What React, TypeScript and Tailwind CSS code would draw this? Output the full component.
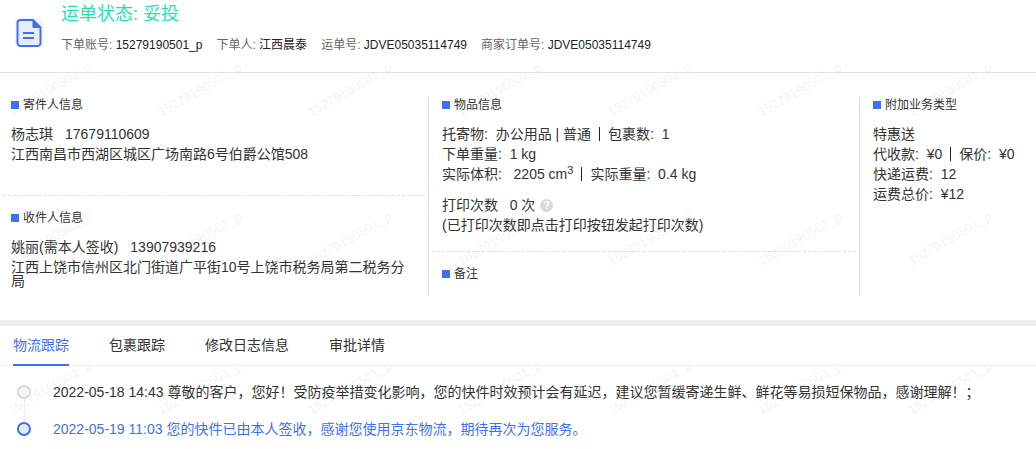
import React from 'react';

const font = { fontFamily: '"Liberation Sans", "Noto Sans CJK SC", sans-serif' };

function Heading({ children }: { children: React.ReactNode }) {
    return (
        <div className="flex items-center gap-[4px] text-[12px] leading-[16px] text-[#333]">
            <span className="w-[8px] h-[8px] bg-[#3f6ff5]" />
            <span>{children}</span>
        </div>
    );
}

function Bar() {
    return <span className="inline-block w-[1px] h-[14px] bg-[#222] mx-[8px] align-[-2px]" />;
}

function DocIcon() {
    return (
        <svg width="28" height="30" viewBox="0 0 28 30" fill="none">
            <rect x="0" y="0" width="28" height="30" rx="5" fill="#f3f6fe" />
            <path d="M5.5 2h12.5l7.5 7.5V25a3 3 0 0 1-3 3H5.5a3 3 0 0 1-3-3V5a3 3 0 0 1 3-3z" fill="#e6edfd" stroke="#3f6ff5" strokeWidth="2" strokeLinejoin="round" />
            <path d="M18 2v7.5h7.5z" fill="#3f6ff5" stroke="#3f6ff5" strokeWidth="1" strokeLinejoin="round" />
            <path d="M8 15h11M8 20h11" stroke="#3f6ff5" strokeWidth="2" />
        </svg>
    );
}

function Watermarks() {
    const items: { x: number; y: number }[] = [];
    for (let r = 0; r < 3; r++) {
        for (let c = 0; c < 7; c++) {
            items.push({ x: c * 150 + 50, y: r * 149 + 90 });
        }
    }
    return (
        <div className="absolute inset-0 overflow-hidden pointer-events-none">
            {items.map((it, i) => (
                <span
                    key={i}
                    className="absolute text-[13px] leading-[16px] text-[#f5f5f5] -translate-x-1/2 -translate-y-1/2 -rotate-[30deg] whitespace-nowrap"
                    style={{ left: it.x, top: it.y }}
                >
                    15279190501_p
                </span>
            ))}
        </div>
    );
}

export default function App() {
    return (
        <div className="relative w-[1036px] h-[449px] overflow-hidden bg-white text-[#333]" style={font}>
            <Watermarks />
            <div className="relative flex flex-col h-full">
                <header className="flex h-[73px] border-b border-[#e0e0e0] pl-[15px] shrink-0">
                    <div className="mt-[18px] mr-[18px]">
                        <DocIcon />
                    </div>
                    <div className="flex flex-col">
                        <div className="text-[18px] leading-[24px] mt-[2px] text-[#1ee3b0]">运单状态: 妥投</div>
                        <div className="flex gap-[14px] mt-[7px] text-[12px] leading-[24px] text-[#222]">
                            <span><span className="text-[#666]">下单账号: </span>15279190501_p</span>
                            <span><span className="text-[#666]">下单人: </span>江西晨泰</span>
                            <span><span className="text-[#666]">运单号: </span>JDVE05035114749</span>
                            <span><span className="text-[#666]">商家订单号: </span>JDVE05035114749</span>
                        </div>
                    </div>
                </header>

                <section className="flex mt-[24px] h-[199px] text-[14px] leading-[20px] shrink-0">
                    <div className="w-[429px] border-r border-[#dcdcdc] flex flex-col">
                        <div className="pl-[11px] h-[98px]">
                            <Heading>寄件人信息</Heading>
                            <div className="mt-[11px]">杨志琪<span className="ml-[12px]">17679110609</span></div>
                            <div>江西南昌市西湖区城区广场南路6号伯爵公馆508</div>
                        </div>
                        <div className="mx-[3px] border-t border-dashed border-[#dcdcdc]" />
                        <div className="pl-[11px] pr-[20px] pt-[14px]">
                            <Heading>收件人信息</Heading>
                            <div className="mt-[11px]">姚丽(需本人签收)<span className="ml-[12px]">13907939216</span></div>
                            <div className="leading-[14px] mt-[3px]">江西上饶市信州区北门街道广平街10号上饶市税务局第二税务分局</div>
                        </div>
                    </div>

                    <div className="w-[431px] border-r border-[#dcdcdc] flex flex-col">
                        <div className="pl-[13px] h-[154px]">
                            <Heading>物品信息</Heading>
                            <div className="mt-[11px]">托寄物:&nbsp; 办公用品 | 普通<Bar />包裹数:&nbsp; 1</div>
                            <div>下单重量:&nbsp; 1 kg</div>
                            <div>实际体积:&nbsp;&nbsp; 2205 cm<sup className="text-[11px] leading-none">3</sup><Bar />实际重量:&nbsp; 0.4 kg</div>
                            <div className="mt-[11px] flex items-center">
                                打印次数&nbsp;&nbsp; 0 次
                                <span className="ml-[5px] w-[13px] h-[13px] rounded-full bg-[#d9d9d9] text-white text-[10px] leading-[13px] text-center font-bold">?</span>
                            </div>
                            <div>(已打印次数即点击打印按钮发起打印次数)</div>
                        </div>
                        <div className="mx-[3px] border-t border-dashed border-[#dcdcdc]" />
                        <div className="pl-[13px] pt-[14px]">
                            <Heading>备注</Heading>
                        </div>
                    </div>

                    <div className="flex-1 pl-[13px]">
                        <Heading>附加业务类型</Heading>
                        <div className="mt-[11px]">特惠送</div>
                        <div>代收款:&nbsp; ¥0<Bar />保价:&nbsp; ¥0</div>
                        <div>快递运费:&nbsp; 12</div>
                        <div>运费总价:&nbsp; ¥12</div>
                    </div>
                </section>

                <div className="h-[6px] bg-[#eeeeee] mt-[24px] shrink-0" />

                <nav className="flex h-[40px] border-b border-[#f0f0f0] pl-[13px] gap-[40px] text-[14px] shrink-0">
                    <span className="h-[40px] leading-[39px] text-[#3f6ff5] border-b-2 border-[#3f6ff5]">物流跟踪</span>
                    <span className="leading-[39px]">包裹跟踪</span>
                    <span className="leading-[39px]">修改日志信息</span>
                    <span className="leading-[39px]">审批详情</span>
                </nav>

                <div className="relative pl-[53px] pt-[16px] text-[14px] leading-[20px]">
                    <span className="absolute left-[24px] top-[26px] bottom-0 w-[1px] bg-[#eeeeee]" />
                    <span className="absolute left-[17px] top-[19px] w-[14px] h-[14px] rounded-full bg-[#f7f7f7] border-2 border-[#d9d9d9]" />
                    <span className="absolute left-[17px] top-[56px] w-[14px] h-[14px] rounded-full bg-[#e6edfd] border-2 border-[#3f6ff5]" />
                    <div>2022-05-18 14:43 尊敬的客户，您好！受防疫举措变化影响，您的快件时效预计会有延迟，建议您暂缓寄递生鲜、鲜花等易损短保物品，感谢理解！；</div>
                    <div className="mt-[17px] text-[#3f6ff5]">2022-05-19 11:03 您的快件已由本人签收，感谢您使用京东物流，期待再次为您服务。</div>
                </div>
            </div>
        </div>
    );
}
